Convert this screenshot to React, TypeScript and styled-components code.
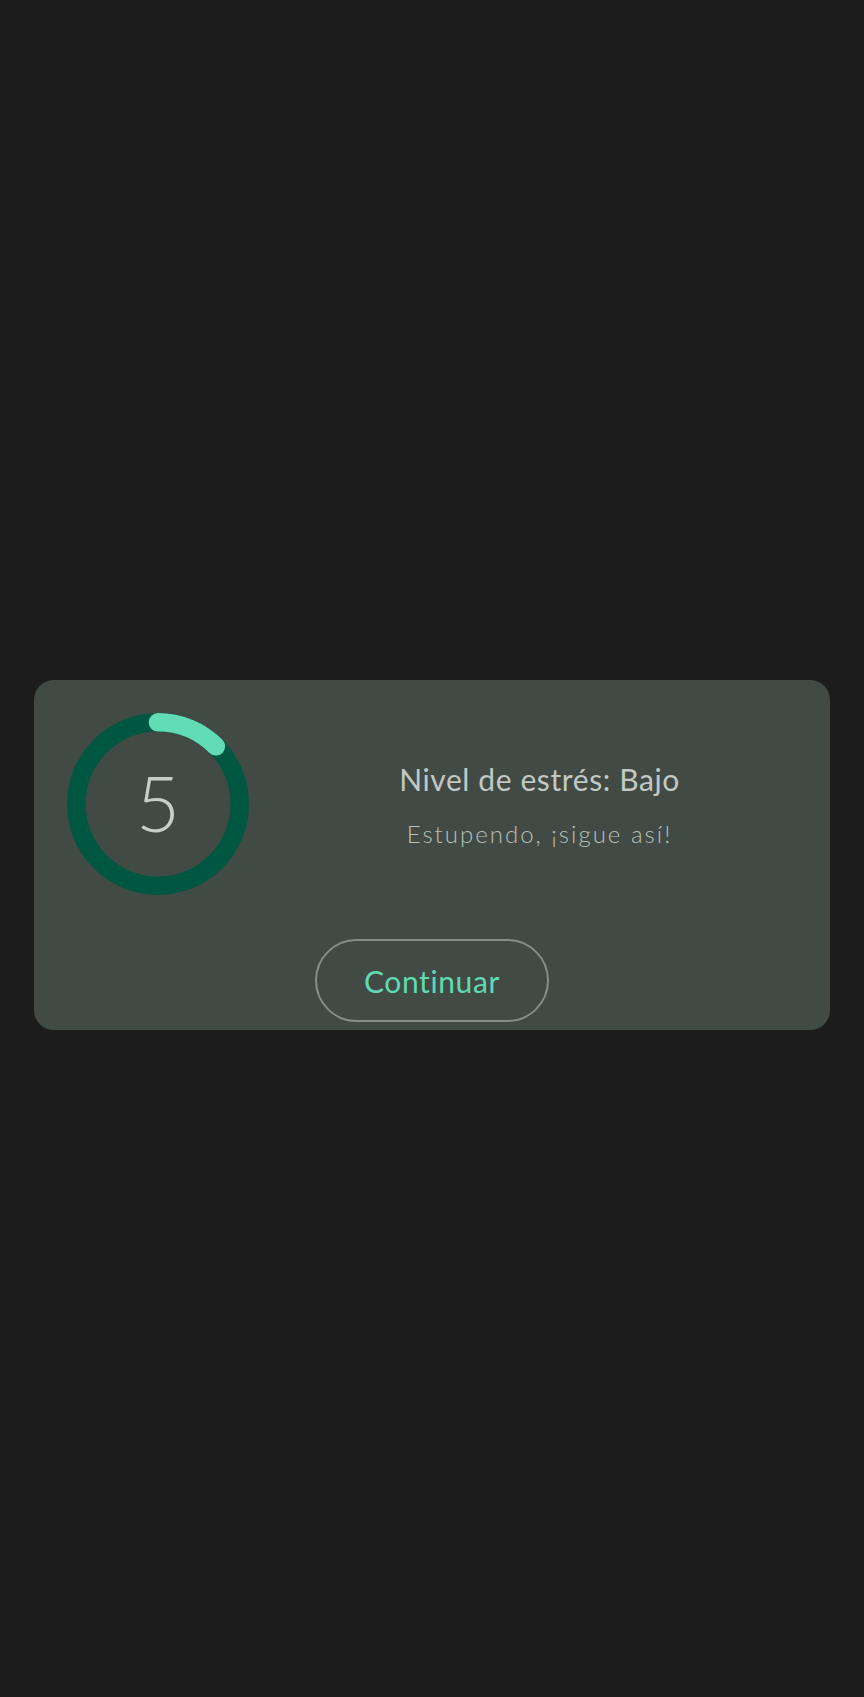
import React from "react";
import styled, { createGlobalStyle } from "styled-components";

const Global = createGlobalStyle`
  html, body { margin: 0; padding: 0; background: #1b1c1b; }
  body { font-family: "Lato", "Noto Sans", sans-serif; }
`;

const Page = styled.div`
  min-height: 1697px;
  box-sizing: border-box;
  padding: 13px 34px 0 34px;
  display: flex;
  flex-direction: column;
  justify-content: center;
`;

const Card = styled.section`
  background: #414a45;
  border-radius: 20px;
  height: 350px;
  box-sizing: border-box;
  padding: 33px 0 8px 33px;
  display: flex;
  flex-direction: column;
`;

const Row = styled.div`
  display: flex;
  align-items: center;
`;

const Gauge = styled.div`
  position: relative;
  width: 182px;
  height: 182px;
  flex: none;
`;

const GaugeValue = styled.span`
  position: absolute;
  inset: 0;
  display: flex;
  align-items: center;
  justify-content: center;
  font-size: 76px;
  font-weight: 300;
  color: #c7cdc8;
  padding-bottom: 4px;
`;

const TextCol = styled.div`
  flex: 1;
  display: flex;
  flex-direction: column;
  align-items: center;
  gap: 22px;
  color: #c2c9c4;
`;

const Title = styled.h2`
  margin: 0;
  font-size: 30px;
  font-weight: 400;
  letter-spacing: 0.6px;
`;

const Subtitle = styled.p`
  margin: 0;
  font-size: 24px;
  font-weight: 300;
  letter-spacing: 2px;
  color: #b9c0bb;
`;

const Footer = styled.div`
  margin-top: auto;
  margin-left: -33px;
  display: flex;
  justify-content: center;
`;

const Button = styled.button`
  width: 234px;
  height: 83px;
  border-radius: 42px;
  border: 2px solid #878e89;
  background: transparent;
  color: #60dab2;
  font-family: inherit;
  font-size: 30px;
  font-weight: 400;
  letter-spacing: 0.6px;
  cursor: pointer;
`;

const R = 81.7;
const C = 2 * Math.PI * R;

export default function App() {
  const value = 5;
  const max = 40;
  const frac = value / max;
  return (
    <>
      <Global />
      <Page>
        <Card>
          <Row>
            <Gauge>
              <svg width="182" height="182" viewBox="0 0 182 182">
                <circle cx="91" cy="91" r={R} fill="none" stroke="#005741" strokeWidth="18.6" />
                <circle
                  cx="91"
                  cy="91"
                  r={R}
                  fill="none"
                  stroke="#62dcb4"
                  strokeWidth="18.6"
                  strokeLinecap="round"
                  strokeDasharray={`${C * frac} ${C}`}
                  transform="rotate(-90 91 91)"
                />
              </svg>
              <GaugeValue>{value}</GaugeValue>
            </Gauge>
            <TextCol>
              <Title>Nivel de estrés: Bajo</Title>
              <Subtitle>Estupendo, ¡sigue así!</Subtitle>
            </TextCol>
          </Row>
          <Footer>
            <Button>Continuar</Button>
          </Footer>
        </Card>
      </Page>
    </>
  );
}
